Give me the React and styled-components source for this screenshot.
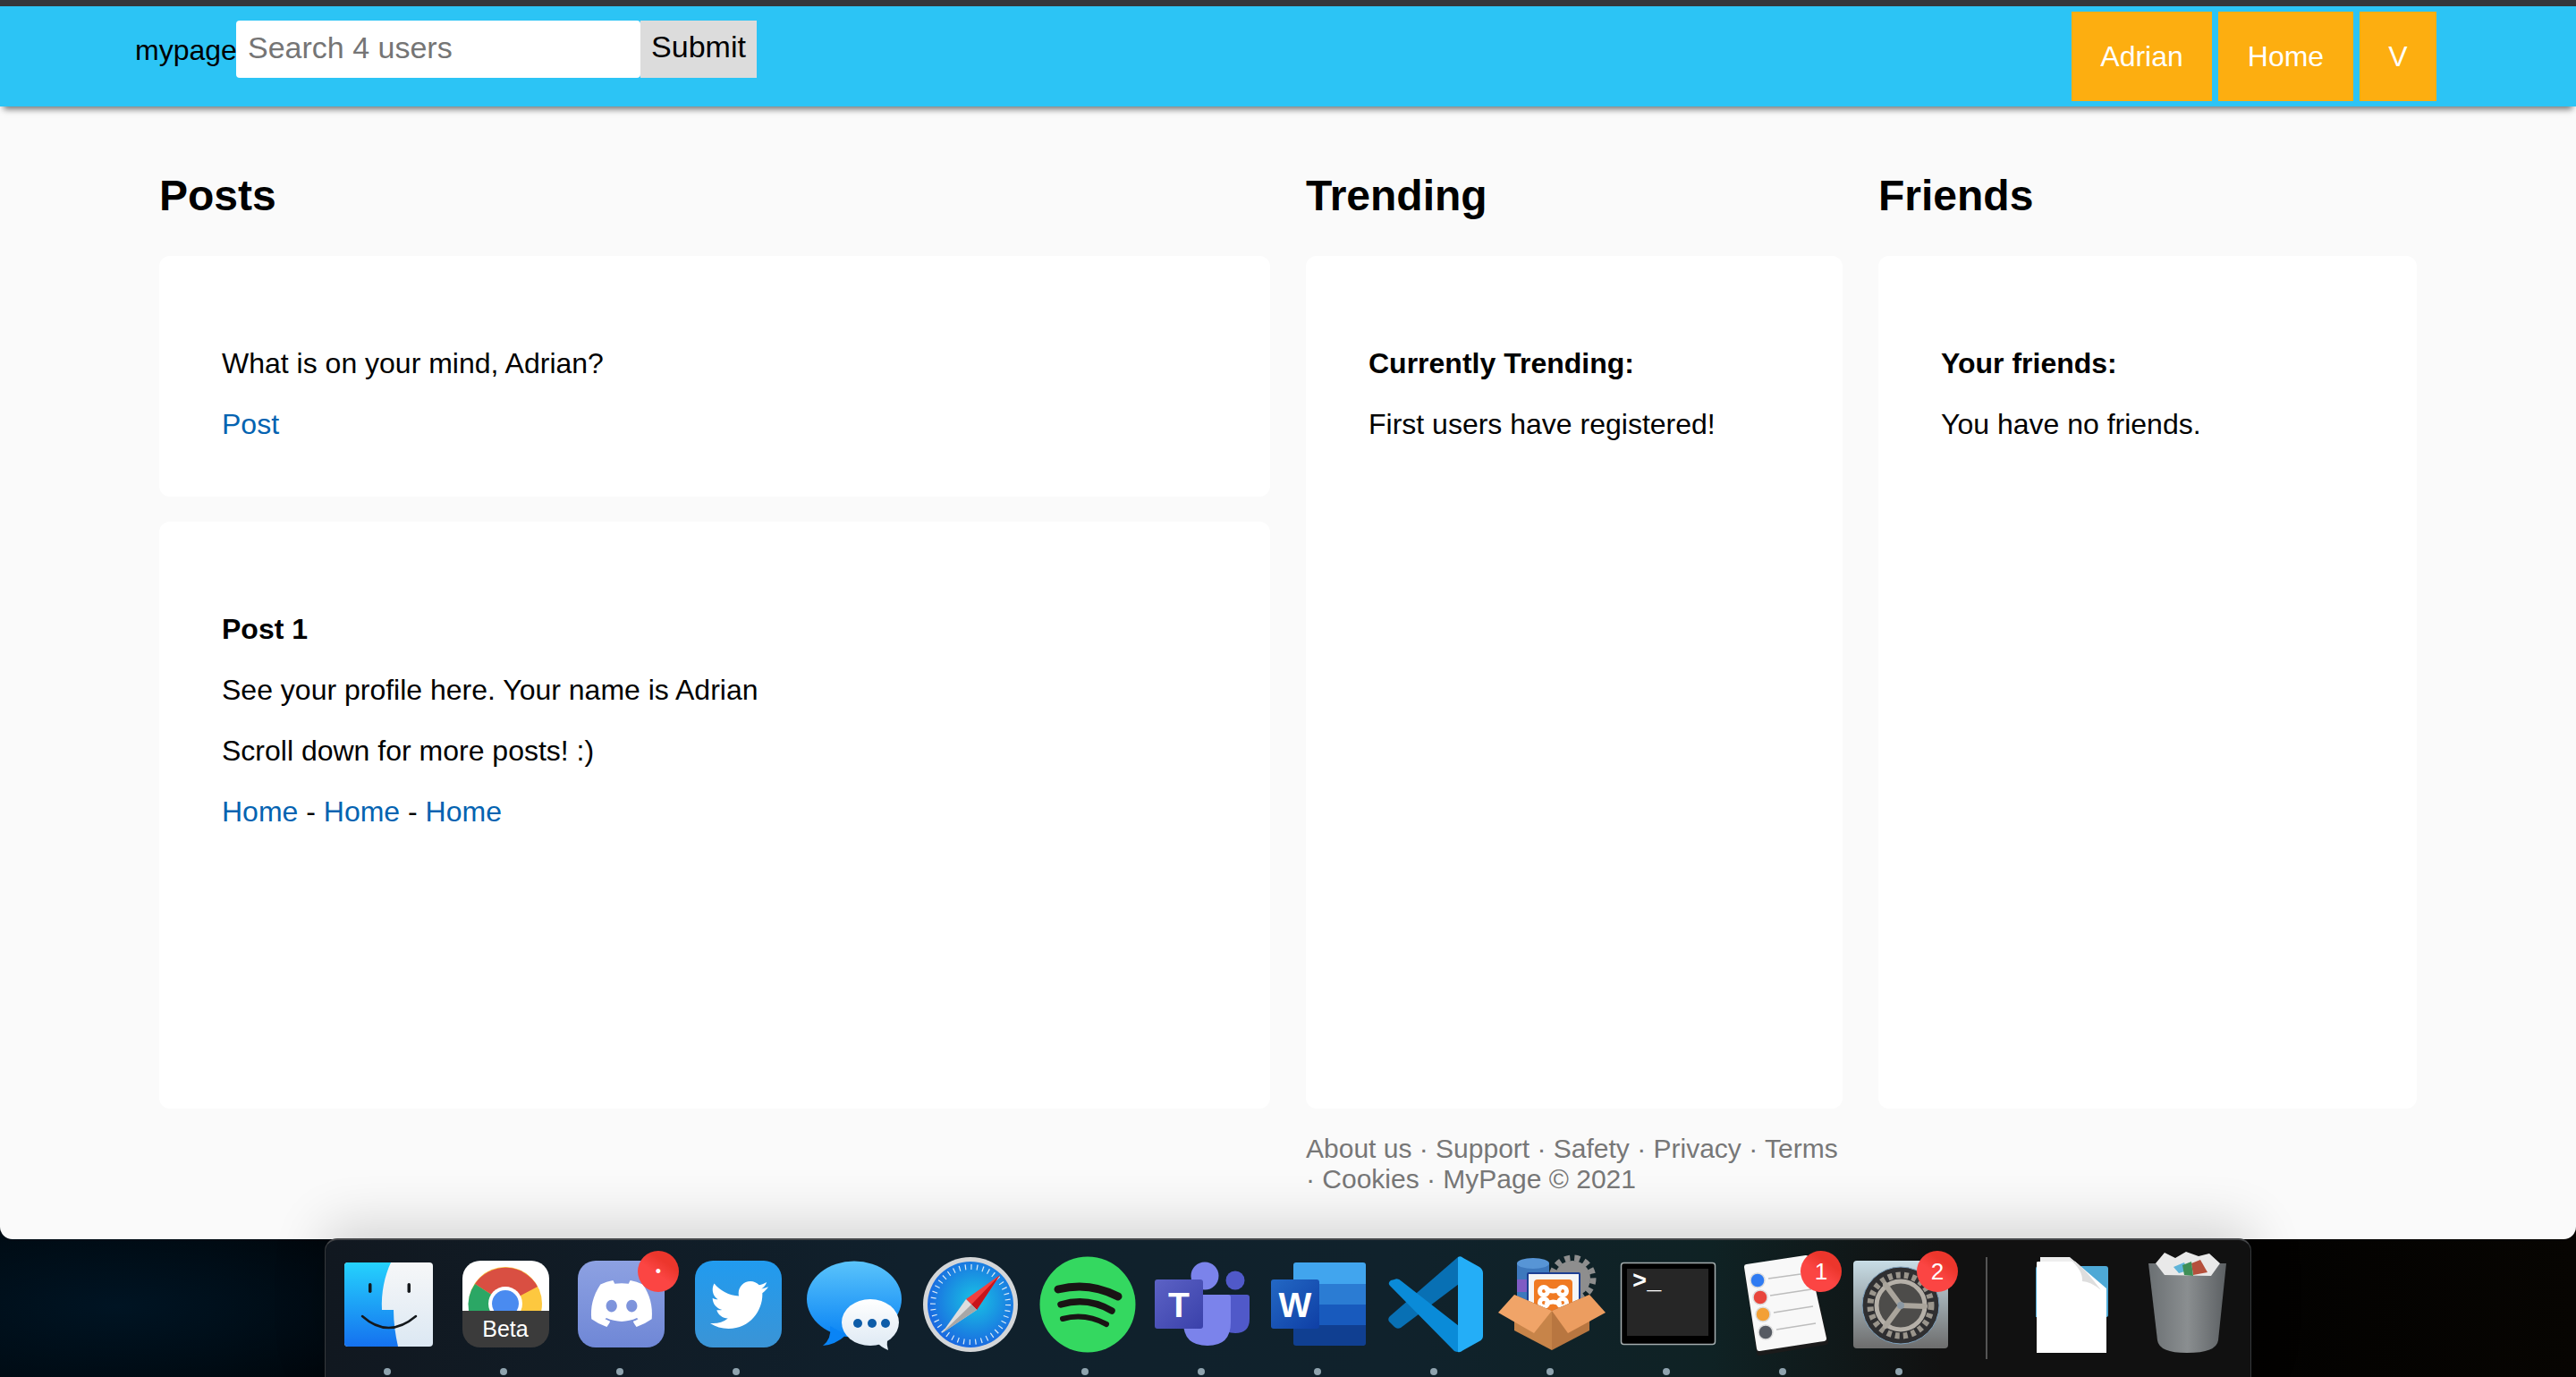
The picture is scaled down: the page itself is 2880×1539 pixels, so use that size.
import React from "react";
import styled, { createGlobalStyle } from "styled-components";
import { FaDiscord, FaTwitter } from "react-icons/fa";

const GlobalStyle = createGlobalStyle`
  html, body {
    margin: 0;
    padding: 0;
    background: #000;
  }
  body {
    font-family: "Liberation Sans", Arial, sans-serif;
    color: #000;
  }
`;

const Desktop = styled.div`
  width: 2880px;
  height: 1539px;
  overflow: hidden;
  display: flex;
  flex-direction: column;
  background:
    radial-gradient(ellipse 500px 160px at 130px 1460px, #001423 0%, rgba(0, 16, 28, 0) 100%),
    linear-gradient(90deg, #000509 0%, #000 14%, #000 80%, #070502 100%);
`;

const BrowserWindow = styled.div`
  height: 1385px;
  flex: none;
  display: flex;
  flex-direction: column;
  background: #fafafa;
  border-radius: 0 0 14px 14px;
  overflow: hidden;
`;

const TabStrip = styled.div`
  height: 7px;
  flex: none;
  background: #35363a;
`;

const Header = styled.header`
  height: 112px;
  flex: none;
  display: flex;
  justify-content: space-between;
  padding: 0 156px 0 151px;
  background: #2cc4f5;
  box-shadow: 0 7px 7px -4px rgba(0, 0, 0, 0.55);
  position: relative;
`;

const SearchForm = styled.form`
  display: flex;
  align-items: flex-start;
  margin: 16px 0 0;
`;

const Brand = styled.span`
  font-size: 32px;
  line-height: 36px;
  margin-top: 15px;
  width: 113px;
  white-space: nowrap;
`;

const SearchInput = styled.input`
  box-sizing: border-box;
  width: 452px;
  height: 64px;
  border: 0;
  border-radius: 4px;
  padding: 0 13px 4px;
  font: 34px "Liberation Sans", Arial, sans-serif;
  background: #fff;
  &::placeholder {
    color: #757575;
    opacity: 1;
  }
`;

const SubmitButton = styled.button`
  width: 130px;
  height: 64px;
  border: 0;
  padding: 0 0 6px;
  background: #dcdcdc;
  color: #000;
  font: 34px "Liberation Sans", Arial, sans-serif;
`;

const NavLinks = styled.nav`
  display: flex;
  gap: 7px;
  margin-top: 6px;
`;

const NavButton = styled.a`
  height: 100px;
  padding: 0 32.5px;
  display: flex;
  align-items: center;
  background: #fdae10;
  color: #fff;
  font-size: 32px;
`;

const Columns = styled.main`
  display: grid;
  grid-template-columns: 1242px 600px 602px;
  column-gap: 40px;
  align-items: start;
  padding: 72px 0 0 178px;
`;

const Column = styled.section`
  display: flex;
  flex-direction: column;
`;

const ColumnTitle = styled.h2`
  margin: 0 0 39px;
  font-size: 48px;
  line-height: 56px;
  font-weight: 700;
`;

const Card = styled.div`
  box-sizing: border-box;
  height: ${(p) => p.$height}px;
  margin-bottom: ${(p) => p.$gap || 0}px;
  padding: 70px 70px 0;
  background: #fff;
  border-radius: 12px;
  font-size: 32px;
  line-height: 36px;
`;

const Line = styled.p`
  margin: 32px 0;
  font-weight: ${(p) => (p.$bold ? 700 : 400)};
`;

const TextLink = styled.a`
  color: #0463b1;
`;

const FooterLinks = styled.footer`
  margin-top: 28px;
  font-size: 30px;
  line-height: 34px;
  color: #777;
`;

const Dock = styled.div`
  flex: none;
  box-sizing: border-box;
  width: 2154px;
  height: 155px;
  margin: -1px auto 0;
  padding: 4px 0 0 4px;
  display: flex;
  align-items: flex-start;
  position: relative;
  background: linear-gradient(
    90deg,
    #111820 0%,
    #10202c 30%,
    #10222c 55%,
    #0f2224 72%,
    #111 84%,
    #111 100%
  );
  border: 1px solid #35383b;
  border-top: 2px solid #45474a;
  border-bottom: 0;
  border-radius: 14px 14px 0 0;
  box-shadow: 0 -14px 60px rgba(0, 0, 0, 0.16);
`;

const DockSlot = styled.div`
  position: relative;
  width: 130px;
  flex: none;
`;

const Art = styled.svg`
  display: block;
  width: 130px;
  height: 130px;
  overflow: visible;
`;

const RunningDot = styled.div`
  width: 8px;
  height: 8px;
  margin: 9px auto 0;
  border-radius: 50%;
  background: #8fa3ae;
`;

const Badge = styled.span`
  position: absolute;
  top: 8px;
  left: 85px;
  width: 46px;
  height: 46px;
  border-radius: 50%;
  display: flex;
  align-items: center;
  justify-content: center;
  background: linear-gradient(35deg, #fb4543 45%, #ec362c 70%);
  color: #fff;
  font-size: ${(p) => p.$size || 26}px;
`;

const DockDivider = styled.div`
  width: 2px;
  height: 114px;
  margin: 15px 28px 0 32px;
  background: #555;
  flex: none;
`;

const FinderArt = () => (
  <Art viewBox="0 0 130 130">
    <defs>
      <linearGradient id="finderBlue" x1="0" y1="0" x2="0" y2="1">
        <stop offset="0" stopColor="#25d2fd" />
        <stop offset="1" stopColor="#1571ef" />
      </linearGradient>
      <linearGradient id="finderLight" x1="0" y1="0" x2="0" y2="1">
        <stop offset="0" stopColor="#f6f7f8" />
        <stop offset="1" stopColor="#dce8f3" />
      </linearGradient>
    </defs>
    <rect x="17" y="21" width="99" height="94" rx="4" fill="url(#finderLight)" />
    <path
      d="M21 21H69C62 36 58 55 59 74H72C72 88 74 102 77 115H21Q17 115 17 111V25Q17 21 21 21Z"
      fill="url(#finderBlue)"
    />
    <rect x="44" y="44" width="3.5" height="11" rx="1.7" fill="#14181c" />
    <rect x="87.5" y="44" width="3.5" height="11" rx="1.7" fill="#14181c" />
    <path d="M37 81Q66 107 97 81" fill="none" stroke="#14181c" strokeWidth="2.5" strokeLinecap="round" />
  </Art>
);

const ChromeArt = () => (
  <Art viewBox="0 0 130 130">
    <clipPath id="chromeTile">
      <rect x="19" y="19" width="97" height="97" rx="20" />
    </clipPath>
    <clipPath id="chromeTop">
      <rect x="19" y="19" width="97" height="56" />
    </clipPath>
    <g clipPath="url(#chromeTile)">
      <rect x="19" y="19" width="97" height="56" fill="#fff" />
      <rect x="19" y="75" width="97" height="41" fill="#3b3b3b" />
    </g>
    <g clipPath="url(#chromeTop)">
      <circle cx="67" cy="67" r="41" fill="#fdc83f" />
      <path d="M67 67L33 45A41 41 0 0 1 103 48Z" fill="#d94f42" />
      <path d="M67 67L33 45A41 41 0 0 0 26 75H50Z" fill="#2ba765" />
      <circle cx="67" cy="67" r="19" fill="#fff" />
      <circle cx="67" cy="67" r="15" fill="#4a8bf0" />
    </g>
    <text x="67" y="104" textAnchor="middle" fontFamily="Liberation Sans" fontSize="25" fill="#fff">
      Beta
    </text>
  </Art>
);

const DiscordArt = () => (
  <Art viewBox="0 0 130 130">
    <defs>
      <linearGradient id="discordTile" x1="0" y1="0" x2="0" y2="1">
        <stop offset="0" stopColor="#8da1e2" />
        <stop offset="1" stopColor="#6f87d6" />
      </linearGradient>
    </defs>
    <rect x="18" y="19" width="97" height="97" rx="20" fill="url(#discordTile)" />
    <FaDiscord x="30" y="30" size={74} color="#fff" />
  </Art>
);

const TwitterArt = () => (
  <Art viewBox="0 0 130 130">
    <defs>
      <linearGradient id="twitterTile" x1="0" y1="0" x2="0" y2="1">
        <stop offset="0" stopColor="#219bef" />
        <stop offset="1" stopColor="#3a94d6" />
      </linearGradient>
    </defs>
    <rect x="19" y="19" width="97" height="97" rx="20" fill="url(#twitterTile)" />
    <FaTwitter x="36" y="36" size={65} color="#fff" />
  </Art>
);

const MessagesArt = () => (
  <Art viewBox="0 0 130 130">
    <defs>
      <linearGradient id="messageBlue" x1="0" y1="0" x2="0" y2="1">
        <stop offset="0" stopColor="#5ac4fb" />
        <stop offset="1" stopColor="#0a84f5" />
      </linearGradient>
      <linearGradient id="messageLight" x1="0" y1="0" x2="0" y2="1">
        <stop offset="0" stopColor="#fff" />
        <stop offset="1" stopColor="#dfeaf4" />
      </linearGradient>
    </defs>
    <ellipse cx="67" cy="62" rx="53" ry="42.5" fill="url(#messageBlue)" />
    <path d="M40 92Q42 106 32 114Q46 113 58 102Z" fill="#0a84f5" />
    <ellipse cx="85" cy="88" rx="32" ry="26" fill="url(#messageLight)" />
    <path d="M92 110Q96 115 105 119Q103 113 104 108Z" fill="#e4edf5" />
    <circle cx="71" cy="89" r="5" fill="#0d5ca8" />
    <circle cx="87" cy="89" r="5" fill="#0d5ca8" />
    <circle cx="102" cy="89" r="5" fill="#0d5ca8" />
  </Art>
);

const SafariArt = () => (
  <Art viewBox="0 0 130 130">
    <defs>
      <radialGradient id="safariFace" cx="0.55" cy="0.45" r="0.6">
        <stop offset="0" stopColor="#19c3e4" />
        <stop offset="1" stopColor="#1a62e0" />
      </radialGradient>
    </defs>
    <circle cx="67" cy="68" r="53" fill="#d4d6d8" />
    <circle cx="67" cy="68" r="48" fill="url(#safariFace)" />
    <circle cx="67" cy="68" r="42" fill="none" stroke="#dcebf7" strokeWidth="6" strokeDasharray="1.2 5.4" />
    <path d="M100 35L62 62L74 74Z" fill="#f2403e" />
    <path d="M100 35L68 68L74 74Z" fill="#c8141a" />
    <path d="M35 100L62 62L74 74Z" fill="#dedede" />
    <path d="M35 100L68 68L74 74Z" fill="#a7a7a7" />
  </Art>
);

const SpotifyArt = () => (
  <Art viewBox="0 0 130 130">
    <circle cx="68" cy="68" r="53.5" fill="#34d860" />
    <g fill="none" stroke="#191414" strokeLinecap="round">
      <path d="M35 51Q70 42 102 59" strokeWidth="9" />
      <path d="M38 68Q68 59 95 75" strokeWidth="7.5" />
      <path d="M40 84Q65 77 89 90" strokeWidth="6" />
    </g>
  </Art>
);

const TeamsArt = () => (
  <Art viewBox="0 0 130 130">
    <defs>
      <linearGradient id="teamsSquare" x1="0" y1="0" x2="1" y2="1">
        <stop offset="0" stopColor="#5c62c5" />
        <stop offset="1" stopColor="#3a41aa" />
      </linearGradient>
    </defs>
    <circle cx="103" cy="41" r="10.5" fill="#5059c9" />
    <path d="M92 57H116Q119 57 119 60V84Q119 100 103 100Q92 100 88 92Z" fill="#5059c9" />
    <circle cx="69" cy="36" r="15.5" fill="#7b83eb" />
    <path d="M45 57H95Q98 57 98 60V88Q98 114 72 114Q45 114 45 88Z" fill="#7b83eb" />
    <rect x="13" y="40" width="54" height="55" rx="3" fill="url(#teamsSquare)" />
    <text x="40" y="82" textAnchor="middle" fontFamily="Liberation Sans" fontWeight="700" fontSize="39" fill="#fff">
      T
    </text>
  </Art>
);

const WordArt = () => (
  <Art viewBox="0 0 130 130">
    <defs>
      <linearGradient id="wordSquare" x1="0" y1="0" x2="1" y2="1">
        <stop offset="0" stopColor="#2368c4" />
        <stop offset="1" stopColor="#0f3fa5" />
      </linearGradient>
    </defs>
    <path d="M41 21H116Q119 21 119 24V45H38V24Q38 21 41 21Z" fill="#41a5ee" />
    <rect x="38" y="45" width="81" height="23" fill="#2b7cd3" />
    <rect x="38" y="68" width="81" height="23" fill="#185abd" />
    <path d="M38 91H119V111Q119 114 116 114H41Q38 114 38 111Z" fill="#103f91" />
    <rect x="13" y="40" width="54" height="55" rx="3" fill="url(#wordSquare)" />
    <text x="40" y="82" textAnchor="middle" fontFamily="Liberation Sans" fontWeight="700" fontSize="39" fill="#fff">
      W
    </text>
  </Art>
);

const VsCodeArt = () => (
  <Art viewBox="0 0 130 130">
    <path d="M92 15L93 45L28 94Q24 96 21 93L15 87Q13 84 16 81Z" fill="#0870b4" />
    <path d="M92 121Q88 121 86 118L16 47Q13 44 17 41L21 40Q25 38 29 42L93 92Z" fill="#0a8bd8" />
    <path d="M92 15Q95 13 98 16L116 26Q120 29 120 33V103Q120 107 116 109L98 119Q94 122 92 121Z" fill="#24aef7" />
  </Art>
);

const XamppArt = () => (
  <Art viewBox="0 0 130 130">
    <circle cx="90" cy="39" r="20" fill="#8e8e8e" />
    <circle cx="90" cy="39" r="23" fill="none" stroke="#8e8e8e" strokeWidth="7" strokeDasharray="6 5" />
    <path d="M28 22V68H64V22Z" fill="#3d78bd" />
    <ellipse cx="46" cy="22" rx="18" ry="6" fill="#5795d6" />
    <rect x="28" y="40" width="18" height="14" fill="#7f5bc4" />
    <rect x="39" y="32" width="60" height="40" rx="2" fill="#1c3f94" />
    <rect x="41" y="34" width="56" height="40" fill="#f4f5f6" />
    <rect x="47" y="40" width="43" height="38" rx="4" fill="#f07a22" />
    <g fill="none" stroke="#fff" strokeWidth="5">
      <path d="M60 50Q68 56 77 50M60 68Q68 62 77 68" />
      <circle cx="58" cy="53" r="4.5" />
      <circle cx="79" cy="53" r="4.5" />
      <circle cx="58" cy="66" r="4.5" />
      <circle cx="79" cy="66" r="4.5" />
    </g>
    <path d="M25 57L67 75L109 57L100 75H34Z" fill="#7c5330" />
    <path d="M25 80V97L67 119V75Z" fill="#c78449" />
    <path d="M109 80V97L67 119V75Z" fill="#b87640" />
    <path d="M7 77L25 57L67 75L47 100Z" fill="#f0a468" />
    <path d="M127 77L109 57L67 75L85 100Z" fill="#ec9d60" />
  </Art>
);

const TerminalArt = () => (
  <Art viewBox="0 0 130 130">
    <rect x="14.5" y="21.5" width="105" height="91" rx="3" fill="#000" stroke="#a4adae" strokeWidth="1.5" />
    <rect x="21" y="28" width="91" height="75" fill="#262626" />
    <text x="27" y="50" fontFamily="Liberation Mono" fontWeight="700" fontSize="27" fill="#fff">
      &gt;_
    </text>
  </Art>
);

const reminderRows = [
  { cx: 37, cy: 41, color: "#2f7bf2", line: "M49 39L85 34" },
  { cx: 40, cy: 60, color: "#e8453c", line: "M51 58L97 51" },
  { cx: 43, cy: 79, color: "#f3a035", line: "M55 77L99 70" },
  { cx: 46, cy: 99, color: "#565a62", line: "M58 96L102 89" },
];

const RemindersArt = () => (
  <Art viewBox="0 0 130 130">
    <path d="M25 27L92 16L113 110L39 122Z" fill="#1b1b1b" stroke="#1b1b1b" strokeWidth="6" strokeLinejoin="round" />
    <path d="M25 26L91 16L111 106L39 117Z" fill="#f8f8f8" stroke="#f8f8f8" strokeWidth="6" strokeLinejoin="round" />
    {reminderRows.map((row) => (
      <g key={row.cx}>
        <circle cx={row.cx} cy={row.cy} r="8" fill={row.color} stroke="#dcdcdc" strokeWidth="1.5" />
        <path d={row.line} stroke="#bdbdbd" strokeWidth="1.5" />
      </g>
    ))}
  </Art>
);

const SystemPrefsArt = () => (
  <Art viewBox="0 0 130 130">
    <defs>
      <linearGradient id="prefsTile" x1="0" y1="0" x2="0" y2="1">
        <stop offset="0" stopColor="#c8dde6" />
        <stop offset="1" stopColor="#6d6d6d" />
      </linearGradient>
    </defs>
    <rect x="14" y="19" width="106" height="98" rx="4" fill="url(#prefsTile)" />
    <circle cx="67" cy="69" r="43" fill="#2f2f31" stroke="#7ea1bd" strokeWidth="1" />
    <circle cx="67" cy="69" r="34" fill="none" stroke="#9a958c" strokeWidth="7" strokeDasharray="5 4.1" />
    <circle cx="67" cy="69" r="27" fill="#4d4c4a" stroke="#b5b0a8" strokeWidth="5" />
    <g stroke="#aaa59c" strokeWidth="6" strokeLinecap="round">
      <path d="M67 69L50 46" />
      <path d="M67 69L94 70" />
      <path d="M67 69L50 92" />
    </g>
    <circle cx="67" cy="69" r="4" fill="#8b98a3" />
  </Art>
);

const DocumentArt = () => (
  <Art viewBox="0 0 130 130">
    <path d="M29 25H104Q107 25 107 28V80Q107 82 104 82H26V28Q26 25 29 25Z" fill="#4ea9d6" />
    <path d="M31 20V15H64L72 22Z" fill="#eee" />
    <path d="M27 21Q27 20 29 20H70L105 50V122H27Z" fill="#fff" />
    <path d="M63 16Q75 20 99 52Q87 42 78 42Q79 30 63 16Z" fill="#dedede" />
  </Art>
);

const TrashArt = () => (
  <Art viewBox="0 0 130 130">
    <defs>
      <linearGradient id="trashCan" x1="0" y1="0" x2="1" y2="0">
        <stop offset="0" stopColor="#6b7073" />
        <stop offset="0.5" stopColor="#8a8e90" />
        <stop offset="1" stopColor="#5c6063" />
      </linearGradient>
    </defs>
    <path d="M22 22L109 22L100 108Q98 122 65 122Q34 122 32 108Z" fill="url(#trashCan)" />
    <path d="M30 22L40 10L52 16L64 9L78 14L90 11L102 22L92 36L40 35Z" fill="#e9e9e9" />
    <path d="M50 26L62 21L66 30L56 33Z" fill="#5fb4d8" />
    <path d="M70 22L80 18L88 32L72 35Z" fill="#b5503c" />
    <path d="M60 24L70 20L72 36L62 35Z" fill="#3f8f56" />
  </Art>
);

const dockApps = [
  { name: "finder", Icon: FinderArt, running: true },
  { name: "chrome", Icon: ChromeArt, running: true },
  { name: "discord", Icon: DiscordArt, running: true, badge: "•", badgeSize: 18 },
  { name: "twitter", Icon: TwitterArt, running: true },
  { name: "messages", Icon: MessagesArt },
  { name: "safari", Icon: SafariArt },
  { name: "spotify", Icon: SpotifyArt, running: true },
  { name: "teams", Icon: TeamsArt, running: true },
  { name: "word", Icon: WordArt, running: true },
  { name: "vscode", Icon: VsCodeArt, running: true },
  { name: "xampp", Icon: XamppArt, running: true },
  { name: "terminal", Icon: TerminalArt, running: true },
  { name: "reminders", Icon: RemindersArt, running: true, badge: "1" },
  { name: "prefs", Icon: SystemPrefsArt, running: true, badge: "2" },
];

const DockApp = ({ app }) => (
  <DockSlot>
    <app.Icon />
    {app.running && <RunningDot />}
    {app.badge && <Badge $size={app.badgeSize}>{app.badge}</Badge>}
  </DockSlot>
);

export default function App() {
  return (
    <Desktop>
      <GlobalStyle />
      <BrowserWindow>
        <TabStrip />
        <Header>
          <SearchForm>
            <Brand>mypage</Brand>
            <SearchInput placeholder="Search 4 users" />
            <SubmitButton type="button">Submit</SubmitButton>
          </SearchForm>
          <NavLinks>
            <NavButton>Adrian</NavButton>
            <NavButton>Home</NavButton>
            <NavButton>V</NavButton>
          </NavLinks>
        </Header>
        <Columns>
          <Column>
            <ColumnTitle>Posts</ColumnTitle>
            <Card $height={269} $gap={28}>
              <Line>What is on your mind, Adrian?</Line>
              <Line>
                <TextLink>Post</TextLink>
              </Line>
            </Card>
            <Card $height={656}>
              <Line $bold>Post 1</Line>
              <Line>See your profile here. Your name is Adrian</Line>
              <Line>Scroll down for more posts! :)</Line>
              <Line>
                <TextLink>Home</TextLink> - <TextLink>Home</TextLink> - <TextLink>Home</TextLink>
              </Line>
            </Card>
          </Column>
          <Column>
            <ColumnTitle>Trending</ColumnTitle>
            <Card $height={953}>
              <Line $bold>Currently Trending:</Line>
              <Line>First users have registered!</Line>
            </Card>
            <FooterLinks>
              About us · Support · Safety · Privacy · Terms · Cookies · MyPage © 2021
            </FooterLinks>
          </Column>
          <Column>
            <ColumnTitle>Friends</ColumnTitle>
            <Card $height={953}>
              <Line $bold>Your friends:</Line>
              <Line>You have no friends.</Line>
            </Card>
          </Column>
        </Columns>
      </BrowserWindow>
      <Dock>
        {dockApps.map((app) => (
          <DockApp key={app.name} app={app} />
        ))}
        <DockDivider />
        <DockSlot>
          <DocumentArt />
        </DockSlot>
        <DockSlot>
          <TrashArt />
        </DockSlot>
      </Dock>
    </Desktop>
  );
}
